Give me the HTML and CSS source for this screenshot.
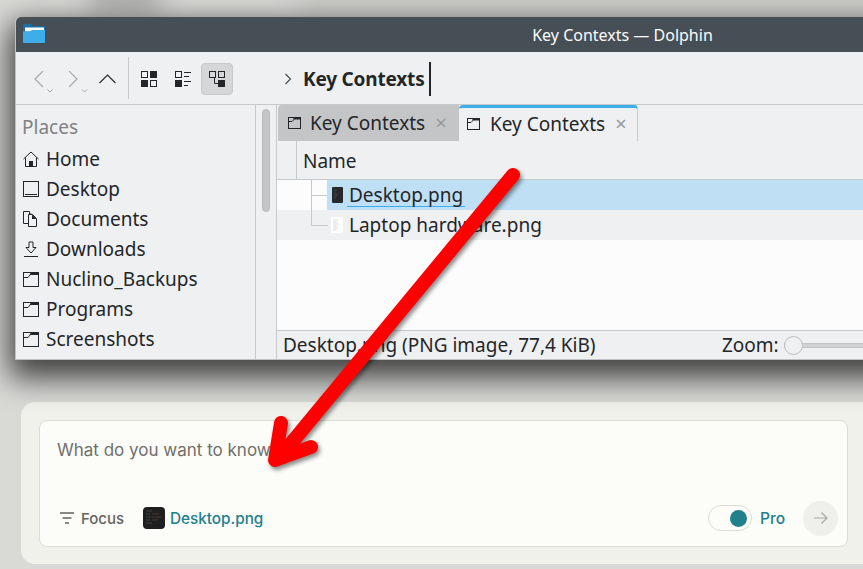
FILE: index.html
```html
<!DOCTYPE html>
<html lang="en">
<head>
<meta charset="utf-8">
<title>Key Contexts</title>
<link rel="stylesheet" href="styles.css">
</head>
<body>
<div class="stage">
  <div class="blob blob-a"></div>
  <div class="blob blob-b"></div>
  <div class="window">
    <div class="titlebar">
      <svg class="app-icon" width="22" height="20" viewBox="0 0 22 20"><path d="M0 1a1 1 0 0 1 1-1h7l2 2h11a1 1 0 0 1 1 1v15a1 1 0 0 1-1 1H1a1 1 0 0 1-1-1z" fill="#1c6ea8"/><rect x="2" y="3.500" width="19" height="4" fill="#fff"/><path d="M0 7.500h7l2-1.500h13v12a1 1 0 0 1-1 1H1a1 1 0 0 1-1-1z" fill="#3daee9"/></svg>
      <span class="title">Key Contexts — Dolphin</span>
    </div>
    <div class="toolbar">
      <div class="nav">
        <svg class="nav-icon" width="35" height="22" viewBox="0 0 35 22"><path d="M9 0 1 8l8 8" fill="none" stroke="#a3a5a8" stroke-width="1.100"/><path d="M13.500 18.500 16 21l2.500-2.500" fill="none" stroke="#a3a5a8" stroke-width="1"/></svg>
        <svg class="nav-icon" width="30" height="22" viewBox="0 0 30 22"><path d="M0 0l8 8-8 8" fill="none" stroke="#a3a5a8" stroke-width="1.100"/><path d="M13 18.500 15.500 21l2.500-2.500" fill="none" stroke="#a3a5a8" stroke-width="1"/></svg>
        <svg class="up-icon" width="17" height="10" viewBox="0 0 17 10"><path d="M.5 9l8-8 8 8" fill="none" stroke="#2b2e31" stroke-width="1.200"/></svg>
      </div>
      <div class="tool-sep"></div>
      <div class="views">
        <span class="view-btn"><svg width="16" height="16" viewBox="0 0 16 16"><rect x=".5" y=".5" width="6" height="6" fill="none" stroke="#232629"/><rect x="9" width="7" height="7" fill="#232629"/><rect y="9" width="7" height="7" fill="#232629"/><rect x="9.500" y="9.500" width="6" height="6" fill="none" stroke="#232629"/></svg></span>
        <span class="view-btn"><svg width="16" height="16" viewBox="0 0 16 16"><rect x=".5" y=".5" width="6" height="6" fill="none" stroke="#232629"/><rect y="9" width="7" height="7" fill="#232629"/><path d="M9 1.500h7M9 5.500h5M9 10.500h7M9 14.500h4" stroke="#232629"/></svg></span>
        <span class="view-btn view-active"><svg width="16" height="16" viewBox="0 0 16 16"><rect x=".5" y=".5" width="6" height="6" fill="none" stroke="#232629"/><rect x="9.500" y=".5" width="6" height="6" fill="none" stroke="#232629"/><rect x="9" y="9" width="7" height="7" fill="#232629"/><path d="M5.500 7v5.500H9" fill="none" stroke="#232629"/></svg></span>
      </div>
      <div class="crumbs">
        <svg width="8" height="12" viewBox="0 0 8 12"><path d="M1.500 1l5 5-5 5" fill="none" stroke="#44474a" stroke-width="1.100"/></svg>
        <b class="crumb">Key Contexts</b>
        <span class="caret"></span>
      </div>
    </div>
    <div class="body">
      <aside class="places">
        <div class="places-title">Places</div>
        <div class="place"><svg width="16" height="16" viewBox="0 0 16 16"><path d="M.5 8 8 1l7.500 7M2.500 6.500v9h11v-9" fill="none" stroke="#232629"/><rect x="6" y="10" width="4" height="5.500" fill="#232629"/></svg>Home</div>
        <div class="place"><svg width="16" height="16" viewBox="0 0 16 16"><rect x=".5" y=".5" width="15" height="15" fill="none" stroke="#232629"/><path d="M2 13.500h12" stroke="#232629"/></svg>Desktop</div>
        <div class="place"><svg width="16" height="16" viewBox="0 0 16 16"><path d="M.5.500h6V3h2M.5.500v12H5" fill="none" stroke="#232629"/><path d="M5.500 3.500h4l4 4v8h-8z" fill="none" stroke="#232629"/><path d="M9 3.500v4.500h4.500" fill="#232629"/></svg>Documents</div>
        <div class="place"><svg width="16" height="16" viewBox="0 0 16 16"><path d="M1 15.500h14M6 1h4v5.500h3L8 12 3 6.500h3z" fill="none" stroke="#232629"/></svg>Downloads</div>
        <div class="place"><svg width="16" height="15" viewBox="0 0 16 15"><rect x=".5" y=".5" width="15" height="14" fill="none" stroke="#232629"/><path d="M8 0h8v3H6.500z" fill="#232629"/><path d="M1 5.500h4l2.500-3" fill="none" stroke="#232629"/></svg>Nuclino_Backups</div>
        <div class="place"><svg width="16" height="15" viewBox="0 0 16 15"><rect x=".5" y=".5" width="15" height="14" fill="none" stroke="#232629"/><path d="M8 0h8v3H6.500z" fill="#232629"/><path d="M1 5.500h4l2.500-3" fill="none" stroke="#232629"/></svg>Programs</div>
        <div class="place"><svg width="16" height="15" viewBox="0 0 16 15"><rect x=".5" y=".5" width="15" height="14" fill="none" stroke="#232629"/><path d="M8 0h8v3H6.500z" fill="#232629"/><path d="M1 5.500h4l2.500-3" fill="none" stroke="#232629"/></svg>Screenshots</div>
      </aside>
      <div class="scroll-track"><div class="scroll-thumb"></div></div>
      <main class="pane">
        <div class="tabs">
          <div class="tab tab-off"><svg width="13" height="12" viewBox="0 0 13 12"><rect x=".5" y=".5" width="12" height="11" fill="none" stroke="#232629"/><path d="M6 0h7v2.500H5z" fill="#232629"/><path d="M1 4.500h3l2-2" fill="none" stroke="#232629"/></svg><span>Key Contexts</span><i class="close">×</i></div>
          <div class="tab tab-on"><svg width="13" height="12" viewBox="0 0 13 12"><rect x=".5" y=".5" width="12" height="11" fill="none" stroke="#232629"/><path d="M6 0h7v2.500H5z" fill="#232629"/><path d="M1 4.500h3l2-2" fill="none" stroke="#232629"/></svg><span>Key Contexts</span><i class="close">×</i></div>
        </div>
        <div class="head"><div class="head-gap"></div><div class="head-name">Name</div></div>
        <div class="list">
          <div class="row row-one">
            <div class="tree tree-mid"></div>
            <div class="file file-sel"><svg class="thumb" width="11" height="16" viewBox="0 0 11 16"><rect width="11" height="16" rx="1" fill="#26282b"/><path d="M2 3h3M2 5h2M2 7h4M2 9h3M2 11h2" stroke="#55585c" stroke-width=".6"/></svg><span class="file-name">Desktop.png</span></div>
          </div>
          <div class="row row-two">
            <div class="tree tree-end"></div>
            <div class="file"><svg class="thumb-l" width="12" height="16" viewBox="0 0 12 16"><rect width="12" height="16" fill="#fff"/><path d="M2 3h5M2 5h4M2 7h6M2 9h4M2 11h5M2 13h3" stroke="#c4c5c6" stroke-width=".6"/></svg><span>Laptop hardware.png</span></div>
          </div>
        </div>
        <div class="status">
          <span>Desktop.png (PNG image, 77,4 KiB)</span>
          <div class="zoom"><span>Zoom:</span><span class="slider"><span class="knob"></span></span></div>
        </div>
      </main>
    </div>
  </div>

  <section class="composer">
    <div class="box">
      <div class="prompt">What do you want to know?</div>
      <div class="actions">
        <div class="focus"><svg width="16" height="14" viewBox="0 0 16 14"><path d="M1 2h14M3.500 7h9M6 12h4" stroke="#64645f" stroke-width="1.400"/></svg>Focus</div>
        <div class="attach">
          <svg class="attach-thumb" width="22" height="22" viewBox="0 0 22 22"><rect width="22" height="22" rx="4" fill="#1f1f20"/><path d="M3 4h6M3 7h4M3 10h5M3 13h4M3 16h6" stroke="#444549"/><path d="M9 7h7M9 10h9M9 13h6" stroke="#4d3535"/></svg>
          Desktop.png
        </div>
        <div class="push"></div>
        <span class="toggle"><span class="toggle-dot"></span></span>
        <span class="pro">Pro</span>
        <span class="send"><svg width="16" height="14" viewBox="0 0 16 14"><path d="M1 7h13M8.500 1.500 14 7l-5.500 5.500" fill="none" stroke="#aaa9a3" stroke-width="1.200"/></svg></span>
      </div>
    </div>
  </section>

  <svg class="arrow" width="863" height="569" viewBox="0 0 863 569">
    <path d="M513 175 279 458M281 423l-6 37 36-13" fill="none" stroke="#fe0000" stroke-width="14" stroke-linecap="round" stroke-linejoin="round"/>
  </svg>
</div>
</body>
</html>
```

FILE: styles.css
```css
* { box-sizing: border-box; }
html, body { margin: 0; padding: 0; }
body { font-family: "Noto Sans", sans-serif; color: #232629; }
.stage {
  position: relative;
  width: 863px;
  height: 569px;
  overflow: hidden;
  background: #d9dad6;
  padding: 17px 0 0 15px;
}
.blob { position: absolute; filter: blur(12px); }
.blob-a { left: 90px; top: -14px; width: 70px; height: 26px; background: #a9aaa6; }
.blob-b { left: 300px; top: -10px; width: 600px; height: 20px; background: #c6c7c2; }

.window {
  position: relative;
  width: 921px;
  height: 343px;
  display: flex;
  flex-direction: column;
  background: #eff0f1;
  border-radius: 5px 5px 0 0;
  border-bottom: 1px solid #bfc1c3;
  border-left: 1px solid #bfc1c3;
  box-shadow: 0 12px 30px 6px rgba(0,0,0,.7);
}
.titlebar {
  height: 35px;
  flex: none;
  display: flex;
  align-items: center;
  justify-content: center;
  background: #474f56;
  border-radius: 5px 5px 0 0;
  position: relative;
  padding-left: 293px;
}
.app-icon { position: absolute; left: 7px; top: 7px; }
.title { color: #fcfcfc; font-size: 16px; }

.toolbar {
  height: 53px;
  flex: none;
  display: flex;
  align-items: center;
  border-bottom: 1px solid #c6c8ca;
}
.nav { width: 112px; display: flex; align-items: flex-start; padding-left: 18px; flex: none; height: 100%; padding-top: 19px; }
.nav-icon { flex: none; }
.up-icon { flex: none; margin-top: 3px; }
.tool-sep { width: 1px; height: 42px; background: #c6c8ca; flex: none; }
.views { display: flex; gap: 2px; margin: 1px 0 0 4px; flex: none; }
.view-btn { width: 32px; height: 32px; display: flex; align-items: center; justify-content: center; }
.view-active { background: #d4d6d8; border: 1px solid #c6c8ca; border-radius: 4px; }
.crumbs { display: flex; align-items: center; margin-left: 51px; padding-top: 1px; }
.crumb { font-size: 19px; font-weight: 700; margin-left: 11px; letter-spacing: -0.01em; }
.caret { width: 2px; height: 34px; background: #232629; margin-left: 4px; }

.body { flex: 1; display: flex; min-height: 0; }
.places { width: 240px; flex: none; border-right: 1px solid #c6c8ca; padding: 7px 0 0 6px; overflow: hidden; }
.places-title { height: 32px; line-height: 30px; font-size: 19px; color: #7f8285; }
.place { height: 30px; display: flex; align-items: center; font-size: 19px; white-space: nowrap; }
.place svg { flex: none; margin-left: 1px; margin-right: 7px; }
.scroll-track { width: 21px; flex: none; padding: 4px 0 0 6px; border-right: 1px solid #c6c8ca; }
.scroll-thumb { width: 8px; height: 103px; border-radius: 4px; background: #c3c5c6; border: 1px solid #b9bbbc; }

.pane { flex: 1; min-width: 0; display: flex; flex-direction: column; background: #fcfcfc; }
.tabs { height: 36px; flex: none; display: flex; background: #eff0f1; padding-left: 1px; }
.tab { display: flex; align-items: center; font-size: 19px; }
.tab svg { flex: none; }
.tab span { white-space: nowrap; }
.tab-off { width: 181px; background: #c4c5c7; border-radius: 4px 0 0 0; padding-left: 10px; }
.tab-off svg { margin-right: 9px; }
.tab-on { width: 179px; background: #eff0f1; border-top: 3px solid #3daee9; border-right: 1px solid #c6c8ca; border-radius: 4px 4px 0 0; padding: 0 0 1px 8px; }
.tab-on svg { margin-right: 10px; }
.close { font-style: normal; font-size: 20px; line-height: 20px; color: #96989b; margin-left: 10px; }

.head { height: 39px; flex: none; display: flex; background: #eff0f1; border-bottom: 1px solid #c6c8ca; }
.head-gap { width: 20px; border-right: 1px solid #c6c8ca; }
.head-name { font-size: 19px; line-height: 41px; padding-left: 6px; }
.list { flex: 1; min-height: 0; }
.row { height: 30px; display: flex; }
.row-two { background: #eff0f1; }
.tree { width: 50px; flex: none; position: relative; }
.tree-mid::before { content: ""; position: absolute; left: 34px; top: 0; width: 1px; height: 30px; background: #c6c8ca; }
.tree-mid::after { content: ""; position: absolute; left: 34px; top: 15px; width: 16px; height: 1px; background: #c6c8ca; }
.tree-end::before { content: ""; position: absolute; left: 34px; top: 0; width: 16px; height: 15px; border-left: 1px solid #c6c8ca; border-bottom: 1px solid #c6c8ca; }
.file { flex: 1; display: flex; align-items: center; font-size: 19px; padding-left: 5px; white-space: nowrap; }
.file-sel { background: #bfdff5; }
.file-name { border-bottom: 1px solid #3daee9; line-height: 22px; padding: 1px 2px 0; margin-left: -2px; }
.thumb { margin-right: 6px; flex: none; }
.thumb-l { margin-left: -1px; margin-right: 6px; flex: none; }
.status {
  height: 29px;
  flex: none;
  display: flex;
  align-items: center;
  justify-content: space-between;
  background: #eff0f1;
  border-top: 1px solid #c6c8ca;
  font-size: 19px;
  padding-left: 6px;
  white-space: nowrap;
}
.zoom { display: flex; align-items: center; width: 214px; gap: 5px; flex: none; }
.slider { position: relative; flex: 1; height: 5px; background: #cfd1d2; border: 1px solid #c2c4c5; }
.knob { position: absolute; left: -1px; top: -8px; width: 19px; height: 19px; border-radius: 50%; background: #eff0f1; border: 1px solid #bcbec0; }

.composer {
  width: 860px;
  height: 162px;
  margin: 42px 0 0 6px;
  background: #f1f1ec;
  border-radius: 14px;
  padding: 18px 0 0 18px;
}
.box {
  width: 809px;
  height: 127px;
  background: #fcfcf8;
  border: 1px solid #dcdcd3;
  border-radius: 8px;
  padding: 19px 9px 0 17px;
  font-family: "Inter", sans-serif;
  display: flex;
  flex-direction: column;
}
.prompt { font-size: 17px; line-height: 20px; color: #6f6f6a; white-space: nowrap; }
.actions { display: flex; align-items: center; height: 36px; margin-top: 40px; }
.focus { display: flex; align-items: center; gap: 6px; font-size: 15px; font-weight: 500; color: #64645f; width: 84px; margin-left: 2px; flex: none; }
.attach { display: flex; align-items: center; gap: 5px; font-size: 15.300px; font-weight: 500; color: #20808d; white-space: nowrap; }
.attach-thumb { flex: none; }
.push { flex: 1; }
.toggle { width: 44px; height: 26px; border: 1px solid #dcdcd3; border-radius: 13px; display: flex; align-items: center; justify-content: flex-end; padding-right: 4px; flex: none; }
.toggle-dot { width: 17px; height: 17px; background: #20808d; border-radius: 50%; }
.pro { font-size: 15.500px; font-weight: 500; color: #20808d; margin-left: 8px; width: 27px; flex: none; }
.send { width: 35px; height: 35px; border-radius: 50%; background: #efefeb; display: flex; align-items: center; justify-content: center; margin-left: 16px; flex: none; }

.arrow { position: absolute; left: 0; top: 0; filter: drop-shadow(2px 3px 2px rgba(0,0,0,.45)); }
```
